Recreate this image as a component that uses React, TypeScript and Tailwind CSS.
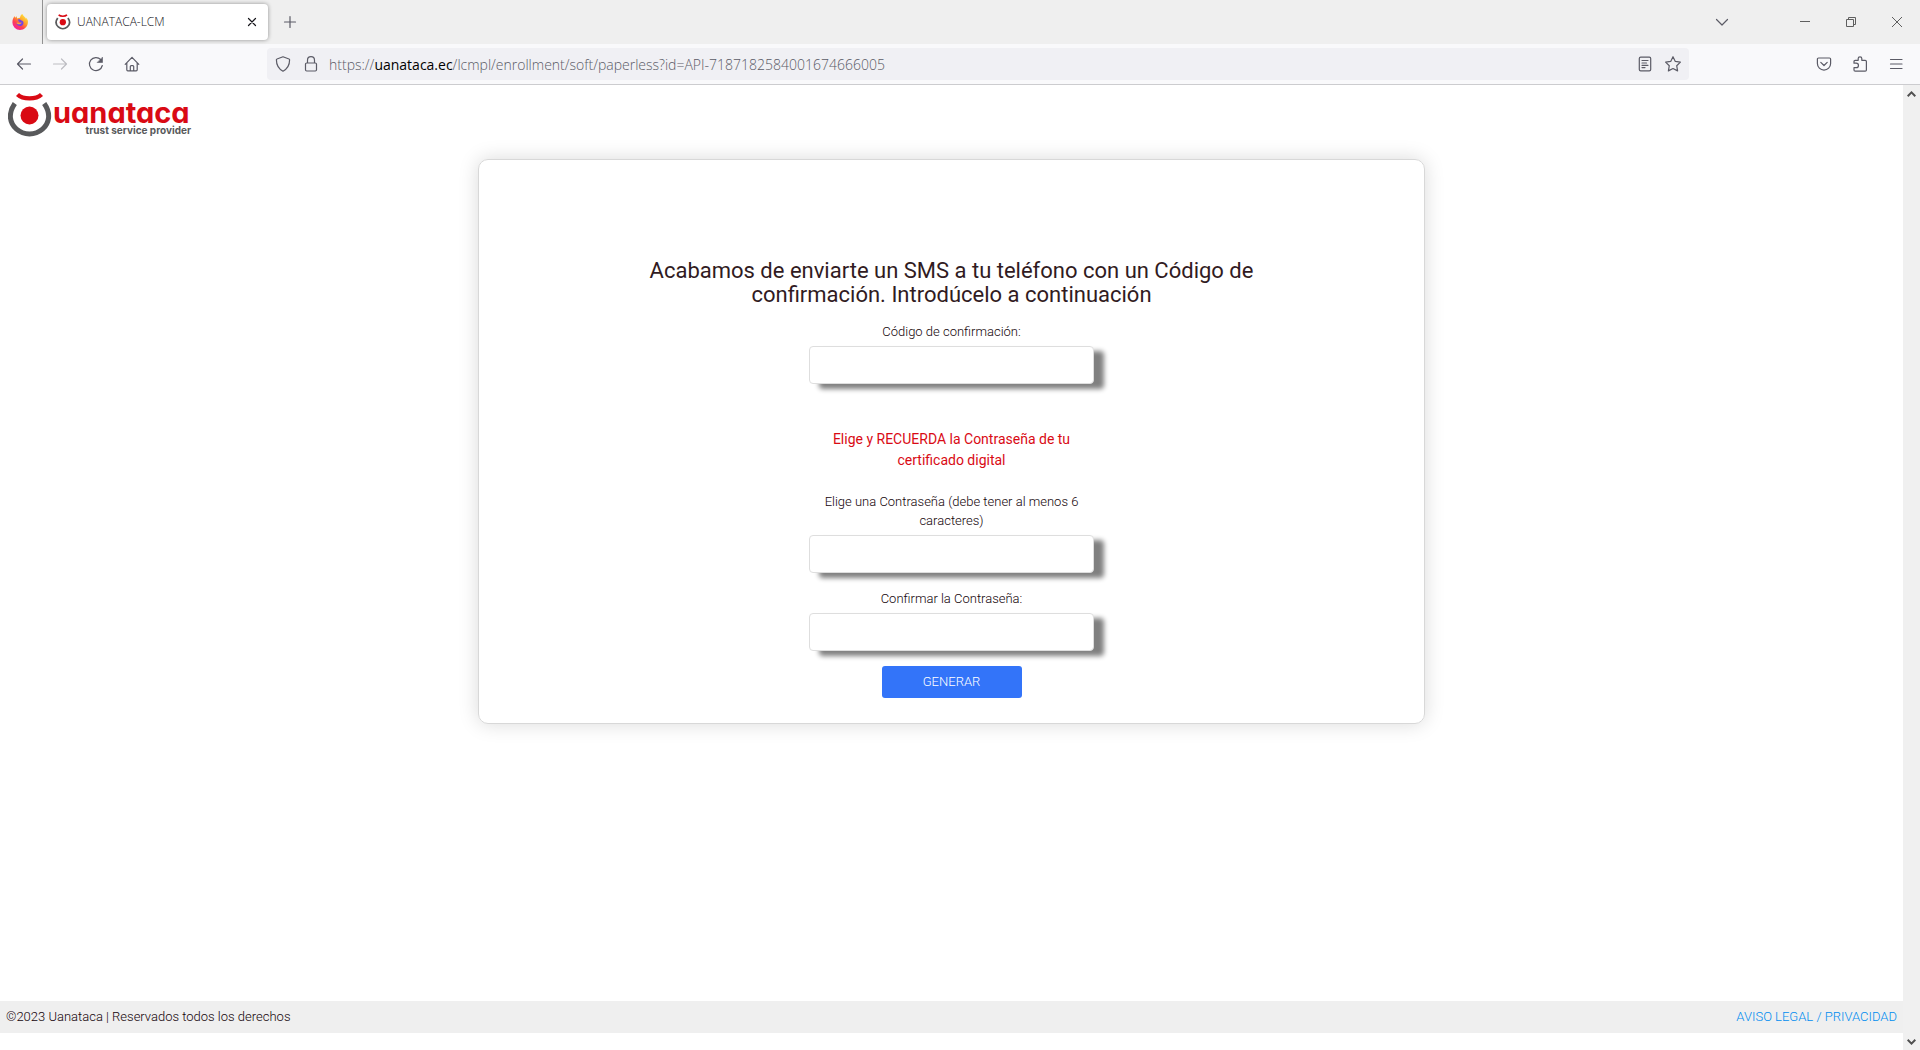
import type { ReactNode } from "react";

type IconProps = { children: ReactNode; className?: string };

function Icon({ children, className = "" }: IconProps) {
  return (
    <svg
      viewBox="0 0 16 16"
      className={`size-4 shrink-0 ${className}`}
      fill="none"
      stroke="currentColor"
      strokeWidth="1.2"
      strokeLinecap="round"
      strokeLinejoin="round"
      aria-hidden="true"
    >
      {children}
    </svg>
  );
}

function IconButton({ label, children, className = "" }: { label: string; children: ReactNode; className?: string }) {
  return (
    <button type="button" aria-label={label} className={`flex h-8 items-center justify-center ${className}`}>
      {children}
    </button>
  );
}

function Mark({ className }: { className: string }) {
  return (
    <svg viewBox="0 0 44 46" className={className} aria-hidden="true">
      <path d="M6.800 11.500C-.5 22 2 31.500 8.500 37.200c7.500 6.400 18.500 6.400 26 0C41 31.500 43.500 22 36.200 11.500" fill="none" stroke="#58595b" strokeWidth="5" />
      <circle cx="21.500" cy="23.500" r="9" fill="#d90a14" />
      <path d="M9.500 2.500C15 7.700 28 7.700 33.500 2.500" fill="none" stroke="#d90a14" strokeWidth="4.4" />
    </svg>
  );
}

function FirefoxLogo() {
  return (
    <svg viewBox="0 0 16 16" className="size-4" aria-hidden="true">
      <defs>
        <linearGradient id="fox" x1="0.8" y1="0.1" x2="0.2" y2="0.9">
          <stop offset="0" stopColor="#ffe03c" />
          <stop offset="0.4" stopColor="#ff9a28" />
          <stop offset="0.7" stopColor="#ff4052" />
          <stop offset="1" stopColor="#f3209a" />
        </linearGradient>
      </defs>
      <path
        d="M15.4 5.6c-.4-.9-1-1.7-1.7-2.1.4.7.6 1.4.7 2C13.500 3 11.400 2.200 10.300 0 8.600 1 8.100 2.700 8 3.800c-1 0-1.900.3-2.500.8-.7-.4-.8-1.500-.6-2.300-.8.400-1.300 1-1.700 1.500C2.800 3.500 2.800 2.500 2.900 2 1.600 3.100.4 5.200.4 8.300A7.600 7.600 0 0 0 8 16c4.200 0 7.700-3.400 7.900-7.500.1-1 0-2-.5-2.900z"
        fill="url(#fox)"
      />
      <path d="M6 5.400c1.500-.5 2.400.2 3 .8 1.900.4 2.900 1.700 2.400 3.500-.4 1.500-1.700 2.300-3.300 2.300-2 0-3.600-1.300-3.700-3 .9-.6 2-.3 2.700.1.700-.2 1.300-.5 1.500-1C7.300 7.900 6 7 6 5.400z" fill="#7542e5" />
      <path d="M4.400 8.900c.9-.7 2-.3 2.900.1.900 0 1.600-.3 2.300-.8-.2 1.400-1.200 2-2.500 2-1.200 0-2.200-.5-2.700-1.300z" fill="#ffa436" />
    </svg>
  );
}

function TabBar() {
  return (
    <div className="flex h-11 items-center bg-[#efefef] text-[#5b5b66]">
      <div className="flex h-full w-[43px] items-center justify-center border-r border-[#929292] pr-0.5">
        <FirefoxLogo />
      </div>
      <div className="ml-1 flex h-9 w-[221px] items-center rounded bg-white px-2 shadow-[0_0_4px_rgba(0,0,0,0.4)]">
        <Mark className="size-4" />
        <span className="ml-1.5 flex-1 font-['Open_Sans',sans-serif] text-xs font-light text-[#15141a]">UANATACA-LCM</span>
        <button type="button" aria-label="Close tab" className="text-[#15141a]">
          <Icon>
            <path d="M4.500 4.500l7 7M11.500 4.500l-7 7" />
          </Icon>
        </button>
      </div>
      <IconButton label="New tab" className="ml-3 w-5">
        <Icon>
          <path d="M8 2.500v11M2.500 8h11" />
        </Icon>
      </IconButton>
      <div className="flex-1" />
      <IconButton label="List all tabs" className="mr-11 w-8">
        <Icon>
          <path d="M2.500 5.500L8 11l5.500-5.500" />
        </Icon>
      </IconButton>
      <IconButton label="Minimize" className="w-[46px]">
        <svg viewBox="0 0 10 10" className="size-[10px]" stroke="#5f5f5f" fill="none" aria-hidden="true">
          <path d="M0 4.500h10" />
        </svg>
      </IconButton>
      <IconButton label="Restore" className="w-[46px]">
        <svg viewBox="0 0 10 10" className="size-[10px]" stroke="#5f5f5f" fill="none" aria-hidden="true">
          <path d="M.5 2.500h7v7h-7zM2.500 2.500v-2h7v7h-2" />
        </svg>
      </IconButton>
      <IconButton label="Close" className="w-[46px]">
        <svg viewBox="0 0 10 10" className="size-[10px]" stroke="#5f5f5f" fill="none" aria-hidden="true">
          <path d="M0 0l10 10M10 0L0 10" />
        </svg>
      </IconButton>
    </div>
  );
}

function Toolbar() {
  return (
    <div className="flex h-[41px] items-center border-b border-[#cccccf] bg-[#f9f9fb] pl-1.5 text-[#5b5b66]">
      <IconButton label="Back" className="w-9">
        <Icon>
          <path d="M14.500 8h-13M6.500 3l-5 5 5 5" />
        </Icon>
      </IconButton>
      <IconButton label="Forward" className="w-9 text-[#bdbdc2]">
        <Icon>
          <path d="M1.500 8h13M9.500 3l5 5-5 5" />
        </Icon>
      </IconButton>
      <IconButton label="Reload" className="w-9">
        <Icon>
          <path d="M14.300 9.500A6.500 6.500 0 1 1 12.800 3.700" />
          <path d="M14.500 1.500v5h-5z" fill="currentColor" strokeWidth="0.6" />
        </Icon>
      </IconButton>
      <IconButton label="Home" className="w-9">
        <Icon>
          <path d="M1.200 8.300L8 1.300l6.800 7M2.800 7v6.800c0 .6.400 1 1 1h8.400c.6 0 1-.4 1-1V7M6.300 14.500v-4c0-.5.400-.9.900-.9h1.600c.5 0 .9.400.9.900v4" />
        </Icon>
      </IconButton>
      <div className="ml-[117px] flex h-8 flex-1 items-center rounded bg-[#f0f0f4] px-2">
        <Icon>
          <path d="M8 .8l6 2.200c.4 0 .6.400.6.800 0 5-2 9-6.600 11.400C3.400 12.800 1.400 8.800 1.400 3.800c0-.4.200-.8.600-.8z" />
        </Icon>
        <Icon className="ml-3">
          <path d="M4.500 7V4.200a3.500 3.500 0 0 1 7 0V7M3.700 7h8.600c.7 0 1.200.5 1.200 1.200v5.600c0 .7-.5 1.200-1.200 1.200H3.700c-.7 0-1.200-.5-1.200-1.200V8.200C2.500 7.500 3 7 3.700 7z" />
        </Icon>
        <span className="ml-2.5 flex-1 pt-0.5 font-['Open_Sans',sans-serif] text-sm font-light whitespace-nowrap text-[#5b5b66]">
          https://<span className="font-normal text-black">uanataca.ec</span>
          /lcmpl/enrollment/soft/paperless?id=API-7187182584001674666005
        </span>
        <Icon>
          <path d="M3.700 1.200h8.600c.8 0 1.400.6 1.400 1.400v10.800c0 .8-.6 1.400-1.400 1.400H3.700c-.8 0-1.400-.6-1.400-1.400V2.600c0-.8.600-1.400 1.400-1.400zM5 4.500h6M5 7h4.500M5 9.300h6M5 11.600h3" />
        </Icon>
        <Icon className="ml-3">
          <path d="M8 .7l2.300 4.700 5.100.7-3.700 3.600.9 5.200L8 12.500l-4.600 2.400.9-5.200L.6 6.100l5.100-.7z" />
        </Icon>
      </div>
      <IconButton label="Save to Pocket" className="ml-[117px] w-9">
        <Icon>
          <path d="M2.500 2h11c.6 0 1.100.5 1.100 1.100V7.500a6.600 6.600 0 0 1-13.200 0V3.100C1.400 2.500 1.900 2 2.500 2z" />
          <path d="M4.800 6.300L8 9.500l3.200-3.200" />
        </Icon>
      </IconButton>
      <IconButton label="Extensions" className="w-9">
        <Icon>
          <path d="M2 7.200V5.500c0-.7.500-1.200 1.200-1.200h3V2.600a1.800 1.800 0 0 1 3.600 0v1.700h3.400c.7 0 1.200.5 1.200 1.200v8.500c0 .7-.5 1.200-1.200 1.200H3.200c-.7 0-1.200-.5-1.200-1.200v-2.300h2.200a2.200 2.200 0 0 0 0-4.500z" />
        </Icon>
      </IconButton>
      <IconButton label="Open application menu" className="mr-1.5 w-9">
        <Icon>
          <path d="M2.500 3.500h11.500M2.500 8h11.500M2.500 12.500h11.500" />
        </Icon>
      </IconButton>
    </div>
  );
}

function Logo() {
  return (
    <a href="#" aria-label="Uanataca trust service provider" className="flex items-start">
      <Mark className="h-[46px] w-[44px]" />
      <svg viewBox="0 0 150 46" className="h-[46px] w-[150px]" aria-hidden="true">
        <text x="1" y="31" fill="#d90a14" className="font-['Inter',sans-serif] text-[29px] font-bold [font-feature-settings:'cv11']">
          uanataca
        </text>
        <text x="139" y="42" textAnchor="end" fill="#58595b" className="font-['Inter',sans-serif] text-[10px] font-bold">
          trust service provider
        </text>
      </svg>
    </a>
  );
}

function Field({ id, label, type, className = "" }: { id: string; label: string; type: string; className?: string }) {
  return (
    <div className={`flex flex-col items-center ${className}`}>
      <label htmlFor={id} className="mb-[5px] px-3 text-[13px] leading-[19px] font-light text-[#14040a]">
        {label}
      </label>
      <input
        id={id}
        type={type}
        className="h-[38px] w-full rounded border border-[#dedede] bg-white px-3 text-sm shadow-[10px_5px_5px_#808080] outline-none"
      />
    </div>
  );
}

export default function App() {
  return (
    <div className="flex h-screen flex-col bg-white">
      <header>
        <TabBar />
        <Toolbar />
      </header>

      <div className="flex min-h-0 flex-1 font-['Roboto',sans-serif] text-[#311b22]">
        <div className="flex min-w-0 flex-1 flex-col">
          <div className="px-2 pt-[7px]">
            <Logo />
          </div>

          <main className="mt-[21px] flex flex-1 flex-col items-center">
            <form className="flex w-full max-w-[947px] flex-col items-center rounded-[10px] border border-[#d8d8d8] px-4 pt-[99px] pb-[25px] text-center shadow-[0_0_20px_rgba(0,0,0,0.15)]">
              <h1 className="max-w-[640px] text-[22px] leading-6">
                Acabamos de enviarte un SMS a tu teléfono con un Código de confirmación. Introdúcelo a continuación
              </h1>
              <div className="mt-[15px] w-[285px]">
                <Field id="code" label="Código de confirmación:" type="text" />
                <p className="mt-[45px] px-5 text-sm leading-[21px] text-[#d90a14]">
                  Elige y RECUERDA la Contraseña de tu certificado digital
                </p>
                <Field
                  id="password"
                  label="Elige una Contraseña (debe tener al menos 6 caracteres)"
                  type="password"
                  className="mt-[21px]"
                />
                <Field id="confirm" label="Confirmar la Contraseña:" type="password" className="mt-4" />
              </div>
              <button type="button" className="mt-[15px] h-8 w-[140px] rounded-[3px] bg-[#3374f9] text-[13px] font-light text-white">
                GENERAR
              </button>
            </form>
          </main>

          <footer className="mb-[17px] flex h-8 items-center justify-between bg-[#efefef] px-1.5 text-[13px] font-light">
            <span className="text-[#14040a]">©2023 Uanataca | Reservados todos los derechos</span>
            <a href="#" className="text-[#008cf0]">
              AVISO LEGAL / PRIVACIDAD
            </a>
          </footer>
        </div>

        <div className="flex w-[17px] flex-col items-center justify-between bg-[#f0f0f0] text-[#505050]">
          <button type="button" aria-label="Scroll up" className="flex h-[17px] items-center">
            <svg viewBox="0 0 9 6" className="h-[6px] w-[9px]" fill="none" stroke="currentColor" strokeWidth="2" aria-hidden="true">
              <path d="M.7 5.200L4.500 1.400l3.800 3.800" />
            </svg>
          </button>
          <button type="button" aria-label="Scroll down" className="flex h-[17px] items-center">
            <svg viewBox="0 0 9 6" className="h-[6px] w-[9px]" fill="none" stroke="currentColor" strokeWidth="2" aria-hidden="true">
              <path d="M.7.800l3.800 3.800L8.300.800" />
            </svg>
          </button>
        </div>
      </div>
    </div>
  );
}
